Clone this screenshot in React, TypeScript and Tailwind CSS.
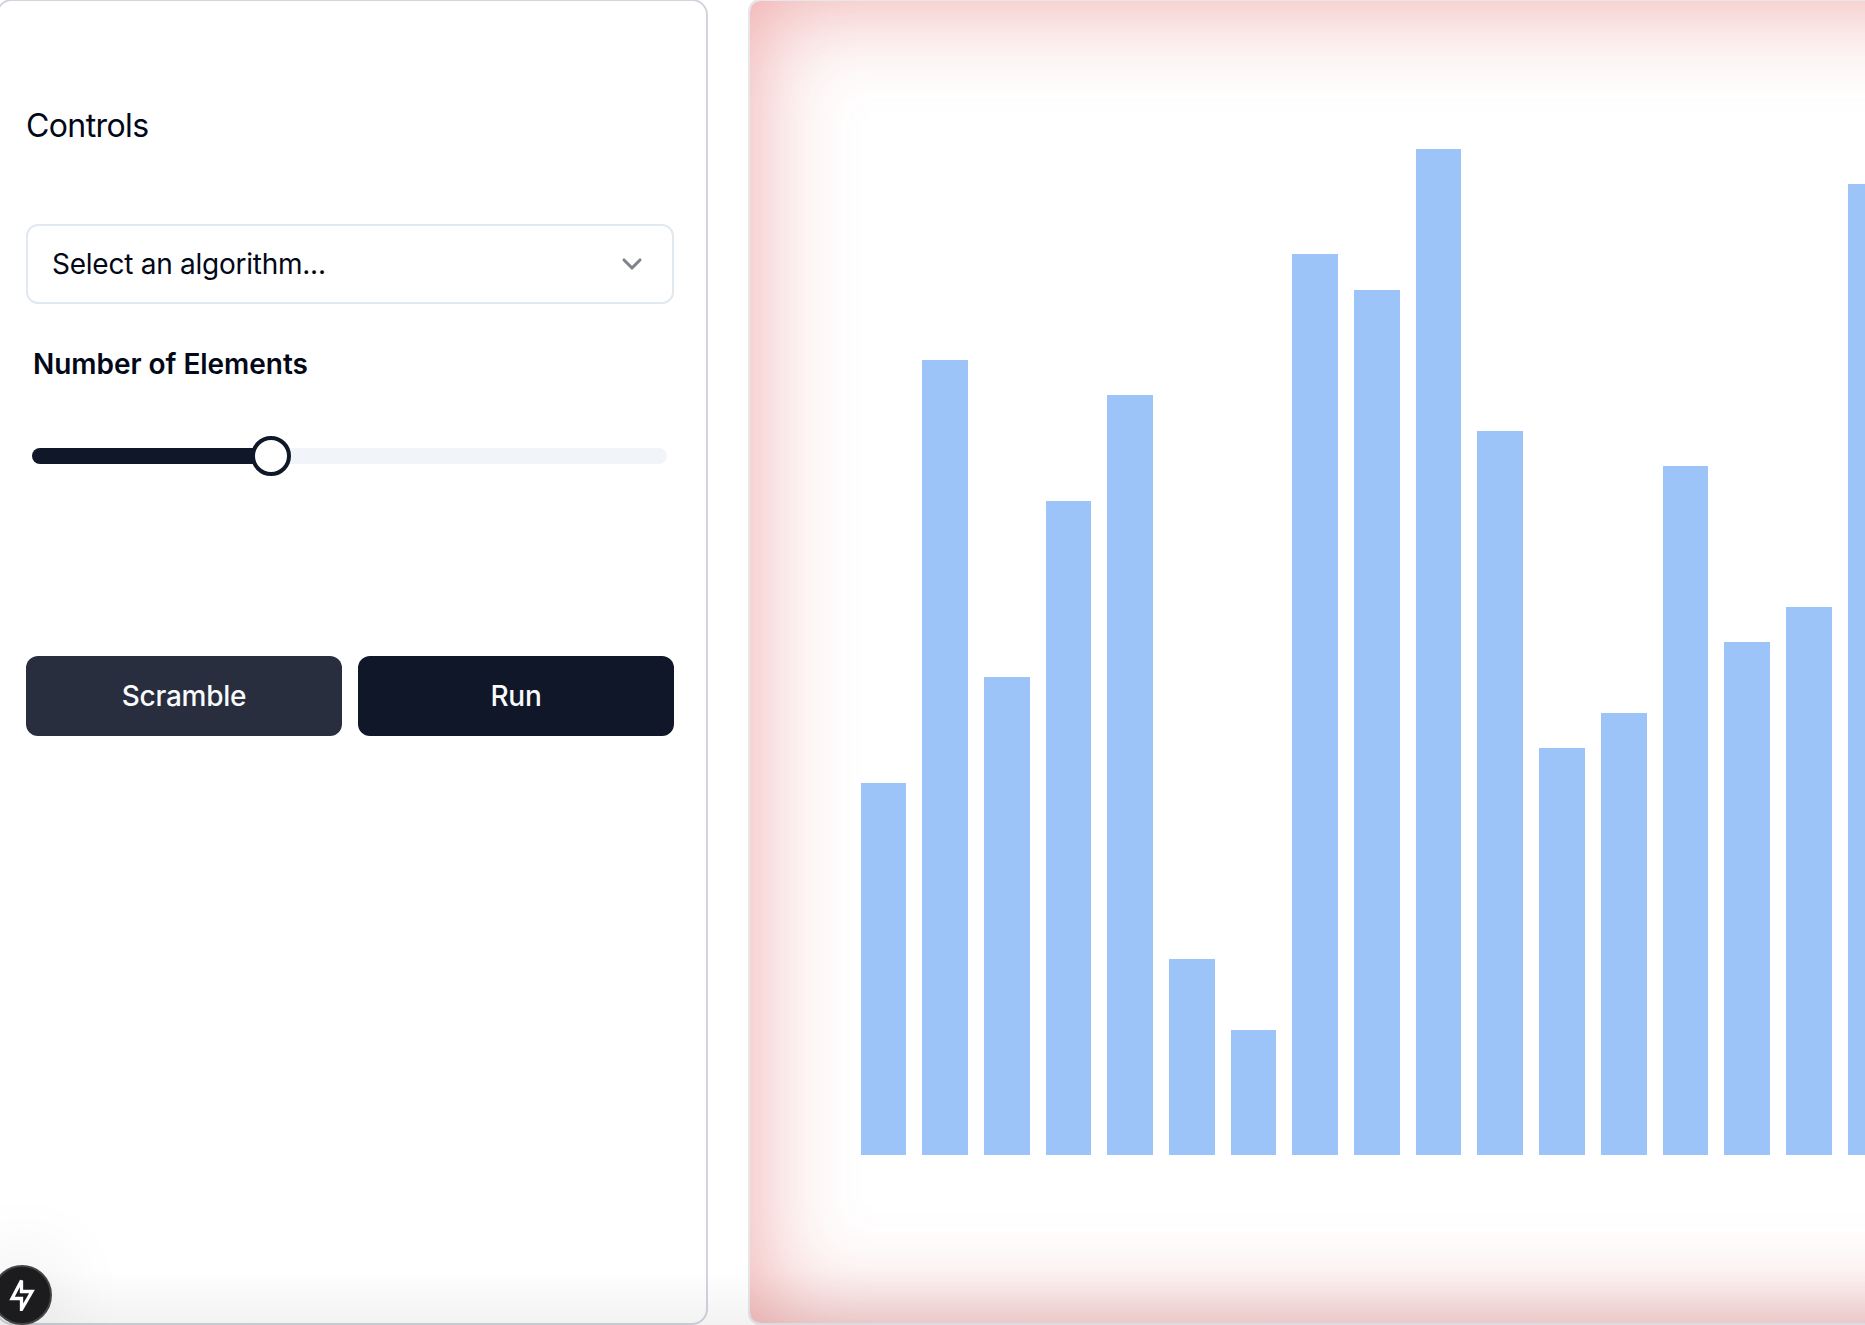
import { ChevronDown } from "lucide-react";

const bars = [372, 795, 478, 654, 760, 196, 125, 901, 865, 1006, 724, 407, 442, 689, 513, 548, 971];

export default function App() {
  return (
    <div className="relative flex h-[1325px] w-[1865px] overflow-hidden bg-white font-['Inter',sans-serif] text-[#020817]">
      <aside className="-mt-px -ml-1 flex w-[712px] shrink-0 flex-col rounded-2xl border-2 border-gray-300 pr-8 pl-7 pt-[107px]">
        <h1 className="text-[32px] leading-9 tracking-[-0.6px]">Controls</h1>
        <button className="mt-20 flex h-20 w-full items-center justify-between rounded-xl border-2 border-slate-200 px-6 text-[28px]">
          <span className="tracking-[-0.25px]">Select an algorithm...</span>
          <ChevronDown className="size-8 text-[#80838b]" strokeWidth={2.3} />
        </button>
        <label className="mt-10 pl-[7px] text-[28px] leading-10 font-semibold tracking-[-0.04px]">Number of Elements</label>
        <div className="relative mr-[7px] ml-1.5 mt-[52px] flex h-10 items-center">
          <div className="h-4 flex-1 overflow-hidden rounded-full bg-slate-100">
            <div className="h-full w-[239px] bg-[#0f1729]" />
          </div>
          <div className="absolute left-[219px] size-10 rounded-full border-4 border-[#0f1729] bg-white" />
        </div>
        <div className="mt-[180px] flex gap-4 text-[28px] font-[550] tracking-[-0.25px] text-slate-50">
          <button className="h-20 flex-1 rounded-xl bg-[#282e3e]">Scramble</button>
          <button className="h-20 flex-1 rounded-xl bg-[#0f1729]">Run</button>
        </div>
      </aside>
      <main className="-mt-px ml-10 flex w-[1500px] shrink-0 items-end gap-4 rounded-xl border-2 border-gray-200 pb-[168px] pl-[110.58px] shadow-[inset_0_0_100px_rgba(215,38,38,0.42)]">
        {bars.map((height, i) => (
          <div key={i} className="w-[45.69px] shrink-0 bg-[#9dc4f8]" style={{ height }} />
        ))}
      </main>
      <div className="pointer-events-none absolute inset-x-0 bottom-0 h-14 bg-linear-to-t from-black/5 to-transparent" />
      <div className="absolute bottom-0 -left-2 flex size-[60px] items-center justify-center rounded-full border-2 border-[#444] bg-[#1c1c1e] shadow-[0_0_80px_rgba(0,0,0,0.15)]">
        <svg className="size-8" viewBox="0 0 32 32" fill="none" stroke="white" strokeWidth="3.3">
          <path d="M15.5 1.5 L6 19.5 H15.5 V30.5 L26 12.5 H15.5 Z" />
        </svg>
      </div>
    </div>
  );
}
